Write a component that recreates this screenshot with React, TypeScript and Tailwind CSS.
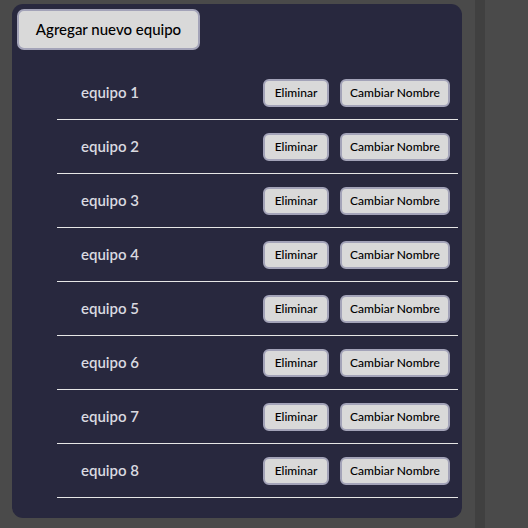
import React from 'react';

const teams = ['equipo 1', 'equipo 2', 'equipo 3', 'equipo 4', 'equipo 5', 'equipo 6', 'equipo 7', 'equipo 8'];

const btn =
  'bg-[#d9d9d9] text-black border-2 border-[#a3a3b8] rounded-[6px] text-[12px] font-medium h-[28px] px-[8px] leading-none';

export default function App() {
  return (
    <div
      className="flex h-[528px] w-full bg-[#4a4a4a] overflow-hidden"
      style={{ fontFamily: 'Lato, "Noto Sans", sans-serif' }}
    >
      {/* team panel */}
      <div className="ml-[12px] mt-[4px] h-[514px] w-[450px] rounded-[11px] bg-[#28283e] pt-[5px] pl-[5px] pr-[4px]">
        <button className="h-[41px] w-[183px] rounded-[7px] border-2 border-[#a3a3b8] bg-[#d9d9d9] text-[15px] font-medium text-black">
          Agregar nuevo equipo
        </button>

        <ul className="mt-[16px] pl-[40px]">
          {teams.map((name) => (
            <li
              key={name}
              className="flex h-[54px] items-center justify-between border-b border-[#e6e6e6] pl-[24px] pr-[8px]"
            >
              <span className="text-[15px] font-semibold text-[#dadae0]">{name}</span>
              <div className="flex gap-[11px]">
                <button className={`${btn} w-[66px]`}>Eliminar</button>
                <button className={`${btn} w-[110px]`}>Cambiar Nombre</button>
              </div>
            </li>
          ))}
        </ul>
      </div>

      {/* scroll strip */}
      <div className="ml-[13px] h-full w-[10px] bg-[#404040]" />
    </div>
  );
}
